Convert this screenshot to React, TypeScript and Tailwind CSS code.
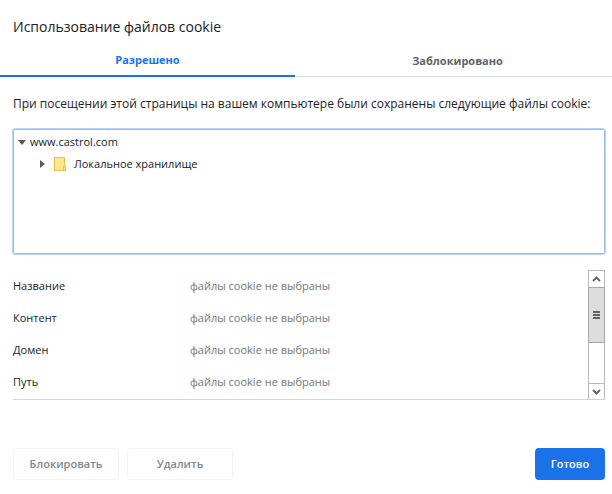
import { useState } from "react";
import { clsx } from "clsx";

const tabs = [
    { id: "allowed", name: "Разрешено", width: "w-[295px]" },
    { id: "blocked", name: "Заблокировано", width: "flex-1 pl-2" },
];

const fields = ["Название", "Контент", "Домен", "Путь"];

const FolderIcon = () => (
    <svg width="12" height="14" viewBox="0 0 12 14" shapeRendering="crispEdges" aria-hidden="true">
        <path d="M0.5 0.5H10.5V9.5H11.5V13.5H0.5Z" fill="#ffe694" stroke="#e8c34a" />
        <path d="M9.5 13V9.5H11" fill="none" stroke="#e8c34a" />
    </svg>
);

const CookieTree = () => (
    <ul
        role="tree"
        tabIndex={0}
        className="mt-[15px] h-[125px] rounded-xs border border-[#9bbce9] px-1 pt-px text-[11px] leading-[22px] outline outline-[#b5d3fb]"
    >
        <li role="treeitem" aria-expanded="true">
            <div className="flex items-center">
                <svg width="8" height="5" viewBox="0 0 8 5" aria-hidden="true">
                    <path d="M0 0H8L4 5Z" fill="#5a5a5a" />
                </svg>
                <span className="ml-1">www.castrol.com</span>
            </div>
            <ul role="group" className="pl-[22px]">
                <li role="treeitem" aria-expanded="false" className="flex items-center">
                    <svg width="5" height="8" viewBox="0 0 5 8" aria-hidden="true">
                        <path d="M0 0V8L5 4Z" fill="#5a5a5a" />
                    </svg>
                    <span className="ml-[9px]">
                        <FolderIcon />
                    </span>
                    <span className="ml-2">Локальное хранилище</span>
                </li>
            </ul>
        </li>
    </ul>
);

const ScrollBar = () => (
    <div className="flex w-[17px] flex-col border border-b-0 border-[#b8b8b8]">
        <button type="button" aria-label="Вверх" className="flex h-4 items-center justify-center">
            <svg width="9" height="6" viewBox="0 0 9 6" aria-hidden="true">
                <path d="M1 5L4.5 1.5L8 5" fill="none" stroke="#606060" strokeWidth="1.8" />
            </svg>
        </button>
        <div className="-mx-px flex h-14 items-center justify-center border border-[#a8a8a8] bg-[#dcdcdc]">
            <svg width="7" height="8" viewBox="0 0 7 8" shapeRendering="crispEdges" aria-hidden="true">
                <path d="M0 1H7M0 4H7M0 7H7" stroke="#606060" strokeWidth="2" />
            </svg>
        </div>
        <div className="flex-1" />
        <button type="button" aria-label="Вниз" className="flex h-4 items-center justify-center border-t border-[#b8b8b8]">
            <svg width="9" height="6" viewBox="0 0 9 6" aria-hidden="true">
                <path d="M1 1L4.5 4.5L8 1" fill="none" stroke="#606060" strokeWidth="1.8" />
            </svg>
        </button>
    </div>
);

export default function App() {
    const [active, setActive] = useState("allowed");

    return (
        <main className="bg-white pt-4 font-['Open_Sans','Noto_Sans',sans-serif] text-[11px] text-[#202124]">
            <h1 className="px-[13px] text-[14px] leading-[22px]">Использование файлов cookie</h1>

            <div role="tablist" className="mt-2 flex">
                {tabs.map((tab) => (
                    <button
                        key={tab.id}
                        type="button"
                        role="tab"
                        aria-selected={active === tab.id}
                        onClick={() => setActive(tab.id)}
                        className={clsx(
                            "h-[31px] font-bold",
                            tab.width,
                            active === tab.id
                                ? "border-b-2 border-[#1a73e8] text-[#1a73e8]"
                                : "border-b border-[#dadce0] text-[#5f6368]"
                        )}
                    >
                        {tab.name}
                    </button>
                ))}
            </div>

            <div className="pl-[13px] pr-[7px]">
                <p className="mt-[17px] whitespace-nowrap text-[12px] leading-5">
                    При посещении этой страницы на вашем компьютере были сохранены следующие файлы cookie:
                </p>

                <CookieTree />

                <div className="mt-4 flex items-stretch border-b border-[#d4d4d4]">
                    <table className="mb-px flex-1 text-left">
                        <tbody>
                            {fields.map((name) => (
                                <tr key={name} className="h-8">
                                    <th className="w-[177px] font-normal">{name}</th>
                                    <td className="text-[#757575]">файлы cookie не выбраны</td>
                                </tr>
                            ))}
                        </tbody>
                    </table>
                    <ScrollBar />
                </div>

                <div className="mt-12 flex gap-2 font-semibold">
                    <button type="button" disabled className="h-8 w-[106px] rounded border border-[#f1f3f4] text-[#80868b]">
                        Блокировать
                    </button>
                    <button type="button" disabled className="h-8 w-[106px] rounded border border-[#f1f3f4] text-[#80868b]">
                        Удалить
                    </button>
                    <button type="button" className="ml-auto h-8 w-[70px] rounded bg-[#1a73e8] text-white">
                        Готово
                    </button>
                </div>
            </div>
        </main>
    );
}
